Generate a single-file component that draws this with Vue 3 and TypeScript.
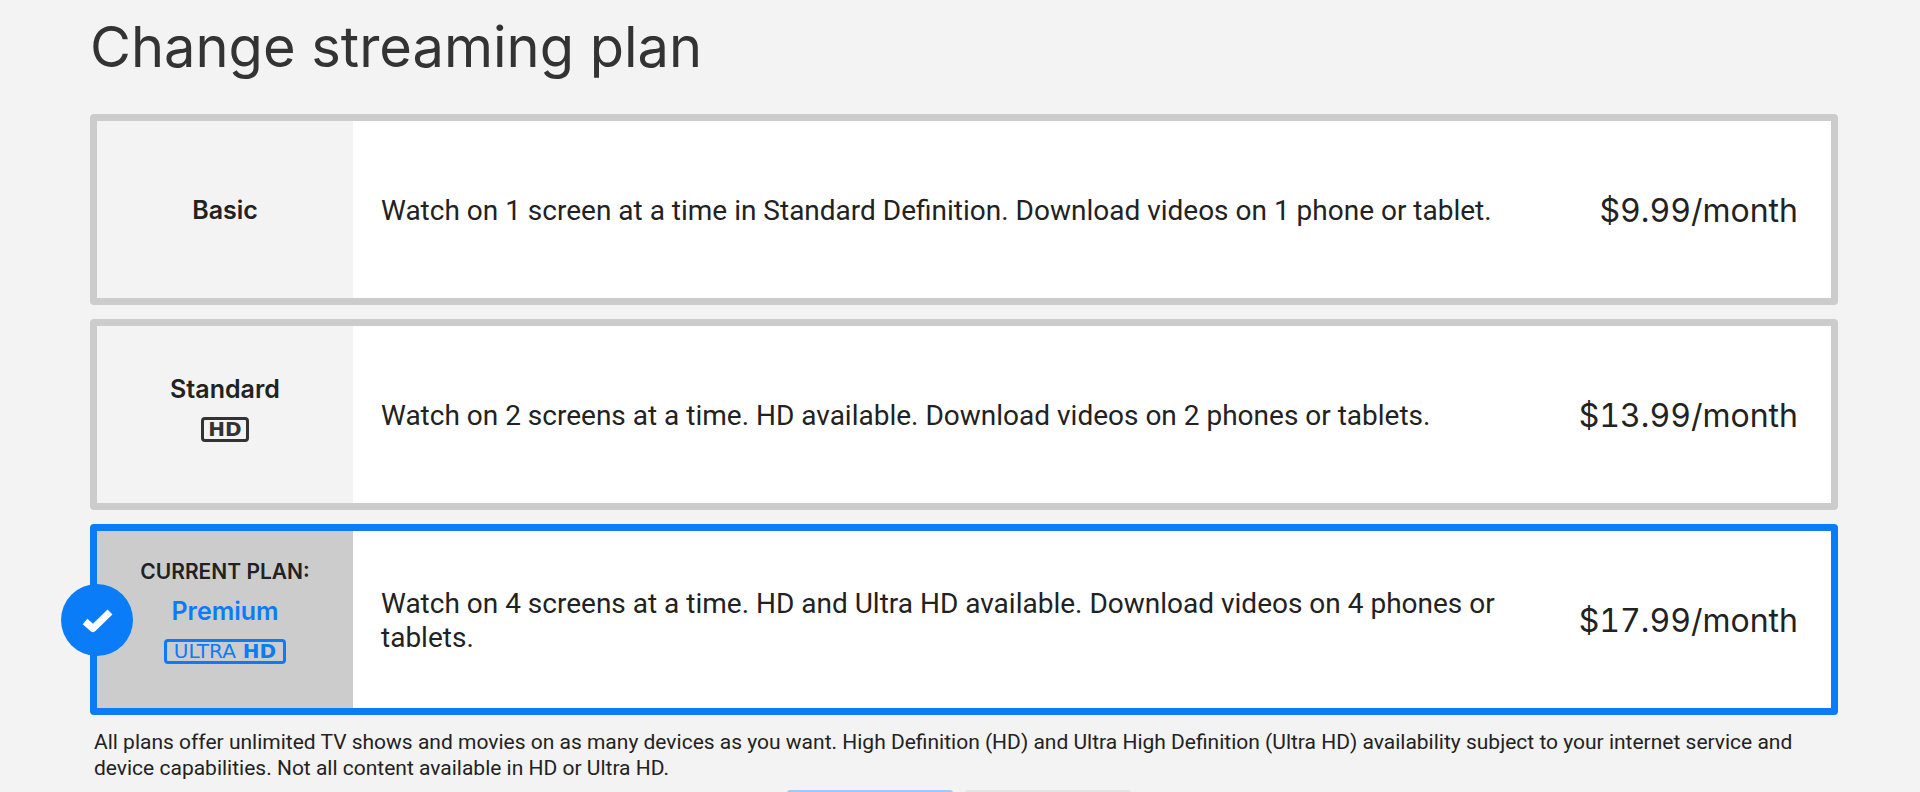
<script setup lang="ts">
import { ref } from 'vue'

interface Plan {
  id: string
  name: string
  badge?: 'hd' | 'uhd'
  description: string
  price: string
}

const plans: Plan[] = [
  {
    id: 'basic',
    name: 'Basic',
    description: 'Watch on 1 screen at a time in Standard Definition. Download videos on 1 phone or tablet.',
    price: '$9.99/month',
  },
  {
    id: 'standard',
    name: 'Standard',
    badge: 'hd',
    description: 'Watch on 2 screens at a time. HD available. Download videos on 2 phones or tablets.',
    price: '$13.99/month',
  },
  {
    id: 'premium',
    name: 'Premium',
    badge: 'uhd',
    description: 'Watch on 4 screens at a time. HD and Ultra HD available. Download videos on 4 phones or tablets.',
    price: '$17.99/month',
  },
]

const currentPlan = 'premium'
const selected = ref(currentPlan)
</script>

<template>
  <main class="page">
    <h1 class="title">Change streaming plan</h1>

    <form class="form" @submit.prevent>
      <div class="plans" role="radiogroup">
        <label
          v-for="plan in plans"
          :key="plan.id"
          class="plan"
          :class="{ selected: selected === plan.id }"
        >
          <input v-model="selected" class="radio" type="radio" name="plan" :value="plan.id" />
          <span class="side">
            <span v-if="plan.id === currentPlan" class="current">CURRENT PLAN:</span>
            <span class="name">{{ plan.name }}</span>
            <span v-if="plan.badge" class="badge" :class="plan.badge">
              <span v-if="plan.badge === 'uhd'" class="ultra">ULTRA</span>
              <span>HD</span>
            </span>
          </span>
          <span class="description">{{ plan.description }}</span>
          <span class="price">{{ plan.price }}</span>
          <svg v-if="selected === plan.id" class="check" viewBox="0 0 72 72" aria-hidden="true">
            <circle cx="36" cy="36" r="36" fill="#0a7cf8" />
            <path d="M24 37.5 32 44.5 49 28" fill="none" stroke="#fff" stroke-width="7" stroke-linejoin="round" />
          </svg>
        </label>
      </div>

      <p class="note">
        All plans offer unlimited TV shows and movies on as many devices as you want. High Definition (HD)
        and Ultra High Definition (Ultra HD) availability subject to your internet service and device
        capabilities. Not all content available in HD or Ultra HD.
      </p>

      <div class="actions">
        <button class="button primary" type="submit" aria-label="Continue" disabled></button>
        <button class="button" type="button" aria-label="Go Back"></button>
      </div>
    </form>
  </main>
</template>

<style>
body {
  margin: 0;
  background: #f3f3f3;
}
</style>

<style scoped>
.page {
  box-sizing: border-box;
  height: 100vh;
  overflow: hidden;
  padding: 12px 82px 0 90px;
  background: #f3f3f3;
  color: #222;
  font-family: Inter, "Liberation Sans", sans-serif;
}

.title {
  margin: 0 0 32px;
  color: #333;
  font-size: 56px;
  font-weight: 400;
  line-height: 70px;
}

.plans {
  display: grid;
  gap: 14px;
}

.plan {
  position: relative;
  display: flex;
  box-sizing: border-box;
  min-height: 191px;
  border: 7px solid #ccc;
  border-radius: 4px;
  background: #fff;
  cursor: pointer;
}

.plan.selected {
  border-color: #0a7cf8;
}

.radio {
  position: absolute;
  opacity: 0;
}

.side {
  display: flex;
  flex: 0 0 256px;
  flex-direction: column;
  align-items: center;
  justify-content: center;
  background: #f3f3f3;
}

.selected .side {
  background: #ccc;
}

.current {
  margin-bottom: 14px;
  font-size: 21px;
  font-weight: 600;
  line-height: 20px;
}

.name {
  font-size: 25px;
  font-weight: 600;
  line-height: 30px;
}

.selected .name,
.selected .badge {
  color: #0a7cf8;
}

.badge {
  display: flex;
  gap: 7px;
  margin: 13px 0;
  padding: 0 4px;
  border: 3px solid currentColor;
  border-radius: 4px;
  color: #333;
  font-family: "DejaVu Sans", sans-serif;
  font-size: 20px;
  font-weight: 700;
  line-height: 19px;
}

.badge.uhd {
  padding: 0 7px;
}

.ultra {
  font-weight: 400;
}

.description {
  flex: 1;
  align-self: center;
  padding: 2px 28px 0;
  font-family: Roboto, sans-serif;
  font-size: 28px;
  line-height: 34px;
}

.price {
  flex: 0 0 252px;
  box-sizing: border-box;
  align-self: center;
  padding: 2px 33px 0 0;
  font-size: 32px;
  font-variant-numeric: tabular-nums;
  line-height: 40px;
  text-align: right;
}

.check {
  position: absolute;
  top: 50%;
  left: -36px;
  width: 72px;
  height: 72px;
  transform: translateY(-50%);
}

.note {
  margin: 14px 4px 9px;
  font-family: Roboto, sans-serif;
  font-size: 21px;
  line-height: 26px;
}

.actions {
  display: flex;
  justify-content: center;
  gap: 12px;
  padding-right: 10px;
}

.button {
  width: 166px;
  height: 48px;
  padding: 0;
  border: 0;
  border-radius: 3px;
  background: #e3e3e3;
}

.button.primary {
  background: #9bcbfb;
}
</style>
